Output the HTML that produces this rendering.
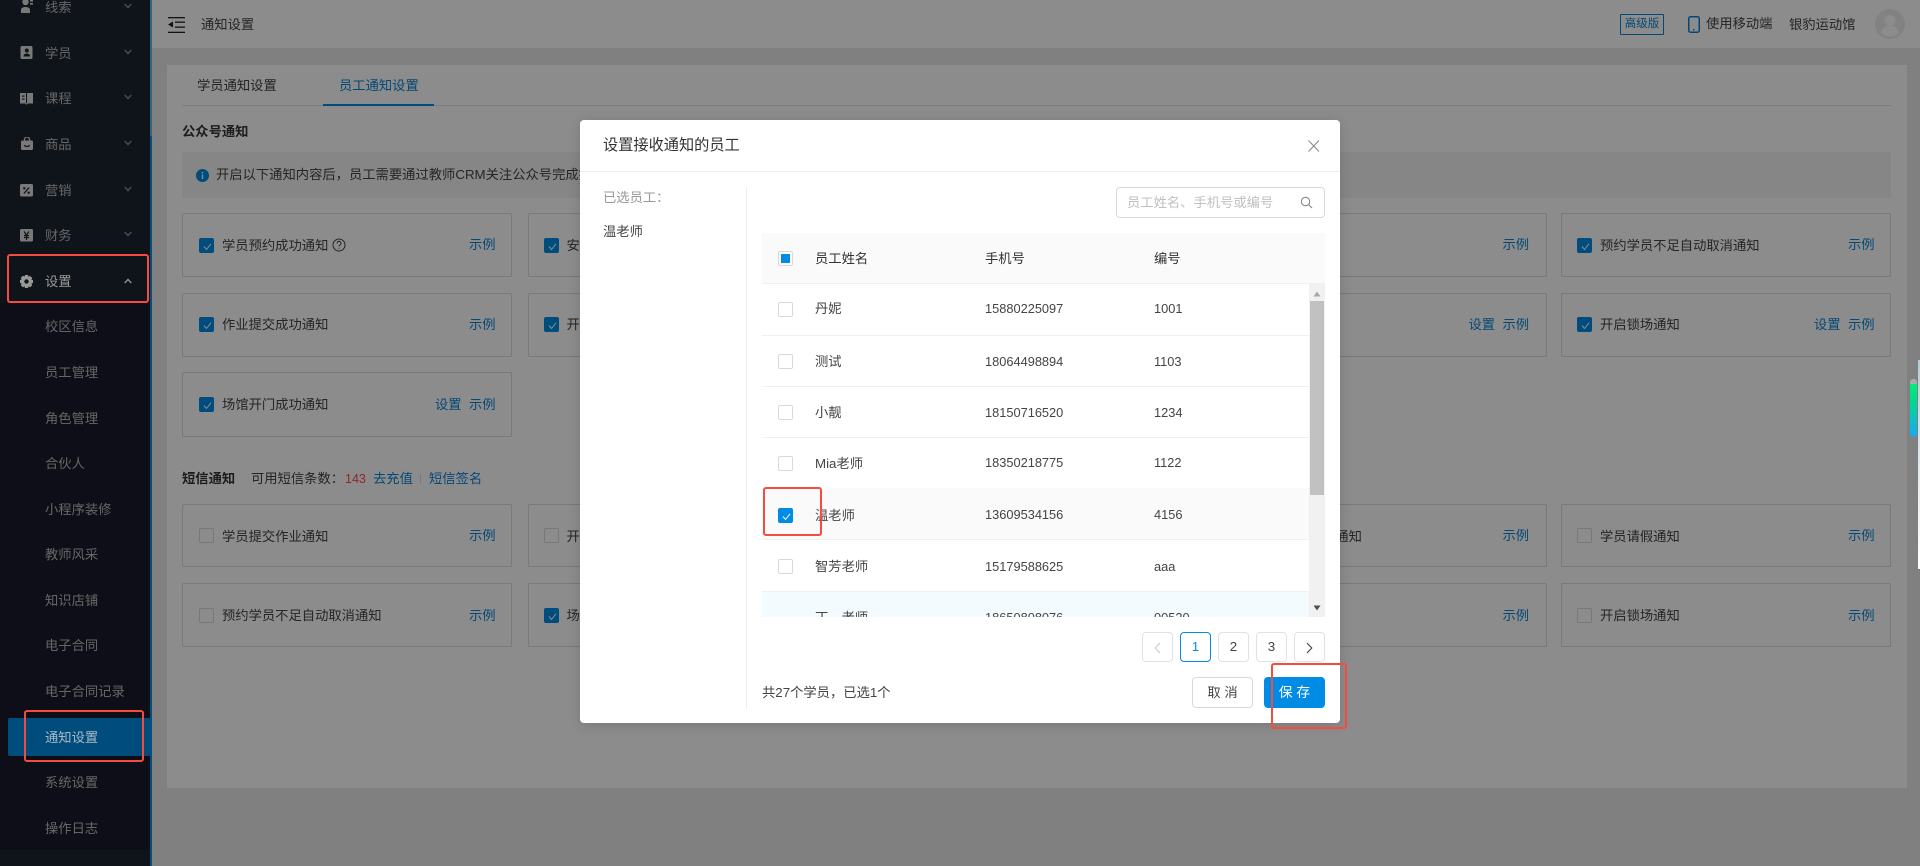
<!DOCTYPE html>
<html lang="zh"><head><meta charset="utf-8"><title>通知设置</title>
<style>
*{box-sizing:border-box}
html,body{margin:0;padding:0;width:1920px;height:866px;overflow:hidden}
body{position:relative;background:#e9e9e9;font:13.3px/20px "Liberation Sans","Noto Sans CJK SC",sans-serif;color:#444}
.a{position:absolute}
.t{position:absolute;white-space:nowrap;line-height:20px}
.side{color:#bbb;left:45px}
.l{color:#0a84d6}
.card{position:absolute;width:330px;border:1px solid #dcdcdc;border-radius:2px;background:#fff}
.cb{position:absolute;width:15px;height:15px;border:1px solid #d9d9d9;border-radius:2px;background:#fff}
.cb.on{background:#008ce4;border-color:#008ce4}
.cb.on svg{position:absolute;left:1px;top:1px}
.ch{position:absolute;left:124px}
.num{font-size:12.8px}
.pg{position:absolute;top:632px;width:31px;height:30px;border:1px solid #e2e2e2;border-radius:4px;background:#fff;text-align:center;line-height:28px;color:#444}
.rb{position:absolute;border:2px solid #f44c40;border-radius:3px;z-index:30}
.row{position:absolute;left:0;width:547px;height:52px;border-bottom:1px solid #f0f0f0}
</style></head><body>

<!-- sidebar -->
<div class="a" style="left:0;top:0;width:150px;height:866px;background:#1d2331"></div>
<div class="a" style="left:0;top:303px;width:150px;height:547px;background:#181b2a"></div>
<div class="a" style="left:150px;top:0;width:2px;height:136px;background:#5fbbe6"></div>
<div class="a" style="left:150px;top:136px;width:2px;height:730px;background:#0a8fe4"></div>

<svg class="a" style="left:20px;top:0" width="14" height="14" viewBox="0 0 14 14" fill="#ddd"><circle cx="5.5" cy="2" r="3.2"/><path d="M1 13v-3c0-2 2-3 4.500-3S10 8 10 10v3z"/><rect x="10" y="0" width="3" height="1.6"/><rect x="10" y="3" width="3" height="1.6"/></svg>
<svg class="a" style="left:20px;top:46px" width="13" height="13" viewBox="0 0 13 13"><rect x=".5" y="0" width="12" height="13" rx="1.500" fill="#ddd"/><circle cx="6.800" cy="4.500" r="2" fill="#1d2331"/><path d="M3.500 10.500c0-2 1.500-3 3.300-3s3.300 1 3.300 3z" fill="#1d2331"/></svg>
<svg class="a" style="left:20px;top:92px" width="13" height="13" viewBox="0 0 13 13"><path d="M0 1h5.500l1 1 1-1H13v10.500H7.500L6.500 13l-1-1.500H0z" fill="#ddd"/><rect x="2" y="3.500" width="2.500" height="1.200" fill="#1d2331"/><rect x="2" y="6.500" width="2.500" height="1.200" fill="#1d2331"/><rect x="6" y="2" width="1" height="9" fill="#1d2331"/></svg>
<svg class="a" style="left:21px;top:137px" width="12" height="13" viewBox="0 0 12 13"><path d="M3.500 4V2.500a2.500 2.500 0 0 1 5 0V4" fill="none" stroke="#ddd" stroke-width="1.200"/><rect x="0" y="3.500" width="12" height="9.500" rx="1.500" fill="#ddd"/><path d="M3.500 8c.5 2 4.500 2 5 0" stroke="#1d2331" stroke-width="1.200" fill="none"/></svg>
<svg class="a" style="left:20px;top:184px" width="13" height="13" viewBox="0 0 13 13"><rect width="13" height="12.500" rx="1.500" fill="#ddd"/><path d="M9 3.500 4 9.500" stroke="#1d2331" stroke-width="1.300"/><circle cx="4.300" cy="4.300" r="1.200" fill="#1d2331"/><circle cx="8.700" cy="8.700" r="1.200" fill="#1d2331"/></svg>
<svg class="a" style="left:20px;top:229px" width="13" height="13" viewBox="0 0 13 13"><rect width="13" height="12.500" rx="1.500" fill="#ddd"/><path d="M4 2.500 6.500 6 9 2.500M6.500 6v5M4 6.500h5M4 8.500h5" stroke="#1d2331" stroke-width="1.200" fill="none"/></svg>
<svg class="a" style="left:20px;top:275px;z-index:15" width="13" height="13" viewBox="0 0 13 13"><path d="M5 0h3l.5 1.800 1.700-.8 2 2-.8 1.700L13 5v3l-1.600.5.800 1.700-2 2-1.700-.8L8 13H5l-.5-1.600-1.700.8-2-2 .8-1.700L0 8V5l1.600-.5-.8-1.700 2-2 1.700.8z" fill="#999"/><circle cx="6.500" cy="6.500" r="2.200" fill="#10131b"/></svg>

<div class="t side" style="top:-2px">线索</div>
<div class="t side" style="top:44px">学员</div>
<div class="t side" style="top:89px">课程</div>
<div class="t side" style="top:135px">商品</div>
<div class="t side" style="top:181px">营销</div>
<div class="t side" style="top:226px">财务</div>
<div class="t" style="left:45px;top:272px;z-index:15;color:#9a9a9a">设置</div>
<div class="t side" style="top:317px">校区信息</div>
<div class="t side" style="top:363px">员工管理</div>
<div class="t side" style="top:409px">角色管理</div>
<div class="t side" style="top:454px">合伙人</div>
<div class="t side" style="top:500px">小程序装修</div>
<div class="t side" style="top:545px">教师风采</div>
<div class="t side" style="top:591px">知识店铺</div>
<div class="t side" style="top:636px">电子合同</div>
<div class="t side" style="top:682px">电子合同记录</div>
<div class="a" style="left:8px;top:718px;width:142px;height:38px;background:#008ce4;border-radius:2px 0 0 2px"></div>
<div class="t" style="left:45px;top:728px;z-index:15;color:#aab8c4">通知设置</div>
<div class="t side" style="top:773px">系统设置</div>
<div class="t side" style="top:819px">操作日志</div>

<svg class="ch" style="top:3px" width="8" height="6" viewBox="0 0 8 6"><path d="M.7 1 4 4.500 7.300 1" fill="none" stroke="#888" stroke-width="1.500"/></svg>
<svg class="ch" style="top:49px" width="8" height="6" viewBox="0 0 8 6"><path d="M.7 1 4 4.500 7.300 1" fill="none" stroke="#888" stroke-width="1.500"/></svg>
<svg class="ch" style="top:94px" width="8" height="6" viewBox="0 0 8 6"><path d="M.7 1 4 4.500 7.300 1" fill="none" stroke="#888" stroke-width="1.500"/></svg>
<svg class="ch" style="top:140px" width="8" height="6" viewBox="0 0 8 6"><path d="M.7 1 4 4.500 7.300 1" fill="none" stroke="#888" stroke-width="1.500"/></svg>
<svg class="ch" style="top:186px" width="8" height="6" viewBox="0 0 8 6"><path d="M.7 1 4 4.500 7.300 1" fill="none" stroke="#888" stroke-width="1.500"/></svg>
<svg class="ch" style="top:231px" width="8" height="6" viewBox="0 0 8 6"><path d="M.7 1 4 4.500 7.300 1" fill="none" stroke="#888" stroke-width="1.500"/></svg>
<svg class="ch" style="top:278px;z-index:15" width="8" height="6" viewBox="0 0 8 6"><path d="M.7 5 4 1.500 7.300 5" fill="none" stroke="#888" stroke-width="1.500"/></svg>

<!-- header -->
<div class="a" style="left:152px;top:0;width:1768px;height:48px;background:#fff"></div>
<svg class="a" style="left:168px;top:16px" width="17" height="17" viewBox="0 0 17 17" fill="#222"><rect y="1" width="17" height="1.300"/><rect y="15.700" width="17" height="1.300"/><rect x="7" y="5.500" width="10" height="1.300"/><rect x="7" y="10.500" width="10" height="1.300"/><path d="M0 8.500 5 5.500v6z"/></svg>
<div class="t" style="left:201px;top:15px">通知设置</div>
<div class="a" style="left:1620px;top:14px;width:44px;height:21px;border:1px solid #0a84d6;border-radius:1px;text-align:center;line-height:19px;font-size:11.500px;color:#0a84d6">高级版</div>
<svg class="a" style="left:1688px;top:16px" width="12" height="17" viewBox="0 0 12 17"><rect x=".75" y=".75" width="10.500" height="15.500" rx="1.800" fill="none" stroke="#0a84d6" stroke-width="1.500"/><rect x="5" y="13" width="1.500" height="1.500" fill="#0a84d6"/></svg>
<div class="t" style="left:1706px;top:14px">使用移动端</div>
<div class="t" style="left:1789px;top:15px">银豹运动馆</div>
<svg class="a" style="left:1875px;top:9px" width="30" height="30" viewBox="0 0 30 30"><circle cx="15" cy="15" r="15" fill="#ededed"/><circle cx="15" cy="11.500" r="5.500" fill="#fff"/><path d="M6 24c1-6 5-7 9-7s8 1 9 7c-2 2-5 3.500-9 3.500S8 26 6 24z" fill="#fff"/></svg>

<!-- main card -->
<div class="a" style="left:167px;top:65px;width:1740px;height:723px;background:#fff"></div>
<div class="a" style="left:182px;top:105px;width:1709px;height:1px;background:#e4e4e4"></div>
<div class="t" style="left:197px;top:76px">学员通知设置</div>
<div class="t l" style="left:339px;top:76px">员工通知设置</div>
<div class="a" style="left:323px;top:104px;width:111px;height:2px;background:#008ce4"></div>
<div class="t" style="left:182px;top:122px;font-weight:700;color:#333">公众号通知</div>
<div class="a" style="left:182px;top:152px;width:1709px;height:46px;background:#f4f4f4"></div>
<svg class="a" style="left:196px;top:169px" width="13" height="13" viewBox="0 0 13 13"><circle cx="6.500" cy="6.500" r="6.500" fill="#008ce4"/><rect x="5.800" y="5.500" width="1.400" height="4.500" fill="#fff"/><rect x="5.800" y="3" width="1.400" height="1.500" fill="#fff"/></svg>
<div class="t" style="left:216px;top:165px">开启以下通知内容后，员工需要通过教师CRM关注公众号完成授权</div>

<!-- row 1 -->
<div class="card" style="left:182px;top:213px;height:64px"><div class="cb on" style="left:16px;top:24px"><svg width="13" height="13" viewBox="0 0 13 13"><path d="M3 6.500 5.500 9.500 10 3.800" fill="none" stroke="#fff" stroke-width="1"/></svg></div><div class="t" style="left:39px;top:22px">学员预约成功通知</div><svg class="a" style="left:149px;top:24px" width="14" height="14" viewBox="0 0 14 14"><circle cx="7" cy="7" r="6" fill="none" stroke="#444"/><path d="M5 5.500c0-3 4-3 4 0 0 1.500-2 1.500-2 3" fill="none" stroke="#444"/><rect x="6.500" y="9.700" width="1" height="1" fill="#444"/></svg><div class="t l" style="left:286px;top:21px">示例</div></div>
<div class="card" style="left:527.500px;top:213px;height:64px"><div class="cb on" style="left:15px;top:24px"><svg width="13" height="13" viewBox="0 0 13 13"><path d="M3 6.500 5.500 9.500 10 3.800" fill="none" stroke="#fff" stroke-width="1"/></svg></div><div class="t" style="left:38px;top:22px">安排上课通知</div></div>
<div class="card" style="left:1216.500px;top:213px;height:64px"><div class="t l" style="left:285px;top:21px">示例</div></div>
<div class="card" style="left:1561px;top:213px;height:64px"><div class="cb on" style="left:15px;top:24px"><svg width="13" height="13" viewBox="0 0 13 13"><path d="M3 6.500 5.500 9.500 10 3.800" fill="none" stroke="#fff" stroke-width="1"/></svg></div><div class="t" style="left:38px;top:22px">预约学员不足自动取消通知</div><div class="t l" style="left:286px;top:21px">示例</div></div>
<!-- row 2 -->
<div class="card" style="left:182px;top:293px;height:64px"><div class="cb on" style="left:16px;top:23px"><svg width="13" height="13" viewBox="0 0 13 13"><path d="M3 6.500 5.500 9.500 10 3.800" fill="none" stroke="#fff" stroke-width="1"/></svg></div><div class="t" style="left:39px;top:21px">作业提交成功通知</div><div class="t l" style="left:286px;top:21px">示例</div></div>
<div class="card" style="left:527.500px;top:293px;height:64px"><div class="cb on" style="left:15px;top:23px"><svg width="13" height="13" viewBox="0 0 13 13"><path d="M3 6.500 5.500 9.500 10 3.800" fill="none" stroke="#fff" stroke-width="1"/></svg></div><div class="t" style="left:38px;top:21px">开课提醒通知</div></div>
<div class="card" style="left:1216.500px;top:293px;height:64px"><div class="t l" style="left:251px;top:21px">设置</div><div class="t l" style="left:285px;top:21px">示例</div></div>
<div class="card" style="left:1561px;top:293px;height:64px"><div class="cb on" style="left:15px;top:23px"><svg width="13" height="13" viewBox="0 0 13 13"><path d="M3 6.500 5.500 9.500 10 3.800" fill="none" stroke="#fff" stroke-width="1"/></svg></div><div class="t" style="left:38px;top:21px">开启锁场通知</div><div class="t l" style="left:252px;top:21px">设置</div><div class="t l" style="left:286px;top:21px">示例</div></div>
<!-- row 3 -->
<div class="card" style="left:182px;top:372px;height:65px"><div class="cb on" style="left:16px;top:24px"><svg width="13" height="13" viewBox="0 0 13 13"><path d="M3 6.500 5.500 9.500 10 3.800" fill="none" stroke="#fff" stroke-width="1"/></svg></div><div class="t" style="left:39px;top:22px">场馆开门成功通知</div><div class="t l" style="left:252px;top:22px">设置</div><div class="t l" style="left:286px;top:22px">示例</div></div>

<!-- SMS -->
<div class="t" style="left:182px;top:469px;font-weight:700;color:#333">短信通知</div>
<div class="t" style="left:251px;top:469px">可用短信条数：</div>
<div class="t" style="left:345px;top:469px;color:#ff4a50;font-size:12.500px">143</div>
<div class="t l" style="left:373px;top:469px">去充值</div>
<div class="a" style="left:420px;top:474px;width:1px;height:10px;background:#ddd"></div>
<div class="t l" style="left:429px;top:469px">短信签名</div>

<div class="card" style="left:182px;top:504px;height:63px"><div class="cb" style="left:16px;top:23px"></div><div class="t" style="left:39px;top:22px">学员提交作业通知</div><div class="t l" style="left:286px;top:21px">示例</div></div>
<div class="card" style="left:527.500px;top:504px;height:63px"><div class="cb" style="left:15px;top:23px"></div><div class="t" style="left:38px;top:22px">开课提醒通知</div></div>
<div class="card" style="left:1216.500px;top:504px;height:63px"><div class="t" style="left:38px;top:22px">学员预约取消通知</div><div class="t l" style="left:285px;top:21px">示例</div></div>
<div class="card" style="left:1561px;top:504px;height:63px"><div class="cb" style="left:15px;top:23px"></div><div class="t" style="left:38px;top:22px">学员请假通知</div><div class="t l" style="left:286px;top:21px">示例</div></div>

<div class="card" style="left:182px;top:583px;height:64px"><div class="cb" style="left:16px;top:24px"></div><div class="t" style="left:39px;top:22px">预约学员不足自动取消通知</div><div class="t l" style="left:286px;top:22px">示例</div></div>
<div class="card" style="left:527.500px;top:583px;height:64px"><div class="cb on" style="left:15px;top:24px"><svg width="13" height="13" viewBox="0 0 13 13"><path d="M3 6.500 5.500 9.500 10 3.800" fill="none" stroke="#fff" stroke-width="1"/></svg></div><div class="t" style="left:38px;top:22px">场馆开门成功通知</div></div>
<div class="card" style="left:1216.500px;top:583px;height:64px"><div class="t l" style="left:285px;top:22px">示例</div></div>
<div class="card" style="left:1561px;top:583px;height:64px"><div class="cb" style="left:15px;top:24px"></div><div class="t" style="left:38px;top:22px">开启锁场通知</div><div class="t l" style="left:286px;top:22px">示例</div></div>

<!-- overlay -->
<div class="a" style="left:0;top:0;width:1918px;height:866px;background:rgba(0,0,0,.45);z-index:10"></div>
<div class="a" style="left:1918px;top:0;width:2px;height:866px;background:rgba(0,0,0,.45);z-index:10"></div>
<div class="a" style="left:1918px;top:360px;width:2px;height:209px;background:linear-gradient(#b8cdd8,#e8eef2 60%,#fff);z-index:11"></div>

<!-- scroll indicator -->
<div class="a" style="left:1910px;top:379px;width:7px;height:58px;border-radius:4px;background:linear-gradient(#00ee77 10%,#00d890 40%,#14aef0 95%);z-index:12;overflow:hidden"><div style="height:5px;background:#aaa"></div></div>

<!-- modal -->
<div class="a" style="left:580px;top:120px;width:760px;height:603px;background:#fff;border-radius:4px;z-index:20;box-shadow:0 2px 12px rgba(0,0,0,.15)"></div>
<div style="position:absolute;left:0;top:0;z-index:21;width:1920px;height:866px">
<div class="a" style="left:580px;top:171px;width:760px;height:1px;background:#ededed"></div>
<div class="t" style="left:603px;top:136px;font-size:15.200px;color:#333">设置接收通知的员工</div>
<svg class="a" style="left:1308px;top:140px" width="12" height="12" viewBox="0 0 12 12"><path d="M.5.500 11 11.500M11 .5.500 11.500" stroke="#888" stroke-width="1" fill="none"/></svg>
<div class="a" style="left:746px;top:187px;width:1px;height:521px;background:#ececec"></div>
<div class="t" style="left:603px;top:188px;color:#999">已选员工：</div>
<div class="t" style="left:603px;top:222px;color:#444">温老师</div>

<div class="a" style="left:1116px;top:187px;width:209px;height:31px;border:1px solid #d9d9d9;border-radius:4px"></div>
<div class="t" style="left:1127px;top:193px;color:#c0c0c0">员工姓名、手机号或编号</div>
<svg class="a" style="left:1300px;top:196px" width="13" height="13" viewBox="0 0 13 13"><circle cx="5.500" cy="5.500" r="4.200" fill="none" stroke="#888" stroke-width="1.100"/><path d="M8.500 8.500 12 12" stroke="#888" stroke-width="1.200"/></svg>

<div class="a" style="left:762px;top:233px;width:563px;height:51px;background:#fafafa;border-bottom:1px solid #f0f0f0"></div>
<div class="cb" style="left:778px;top:251px"></div>
<div class="a" style="left:781px;top:254px;width:9px;height:9px;background:#008ce4"></div>
<div class="t" style="left:815px;top:249px;color:#333">员工姓名</div>
<div class="t" style="left:985px;top:249px;color:#333">手机号</div>
<div class="t" style="left:1154px;top:249px;color:#333">编号</div>

<div class="a" style="left:762px;top:284px;width:563px;height:333px;overflow:hidden">
 <div class="row" style="top:0"></div>
 <div class="row" style="top:51px;height:52px"></div>
 <div class="row" style="top:102px;height:52px"></div>
 <div class="row" style="top:153px;height:52px"></div>
 <div class="row" style="top:204px;height:52px;background:#fafafa"></div>
 <div class="row" style="top:256px;height:52px"></div>
 <div class="row" style="top:307px;height:60px;background:#f4fbff;border-top:1px solid #f0f0f0"></div>
 <div class="cb" style="left:16px;top:18px"></div><div class="t" style="left:53px;top:15px">丹妮</div><div class="t num" style="left:223px;top:15px">15880225097</div><div class="t num" style="left:392px;top:15px">1001</div>
 <div class="cb" style="left:16px;top:70px"></div><div class="t" style="left:53px;top:68px">测试</div><div class="t num" style="left:223px;top:68px">18064498894</div><div class="t num" style="left:392px;top:68px">1103</div>
 <div class="cb" style="left:16px;top:121px"></div><div class="t" style="left:53px;top:119px">小靓</div><div class="t num" style="left:223px;top:119px">18150716520</div><div class="t num" style="left:392px;top:119px">1234</div>
 <div class="cb" style="left:16px;top:172px"></div><div class="t" style="left:53px;top:170px">Mia老师</div><div class="t num" style="left:223px;top:169px">18350218775</div><div class="t num" style="left:392px;top:169px">1122</div>
 <div class="cb on" style="left:16px;top:224px"><svg width="13" height="13" viewBox="0 0 13 13"><path d="M3 6.500 5.500 9.500 10 3.800" fill="none" stroke="#fff" stroke-width="1"/></svg></div><div class="t" style="left:53px;top:222px">温老师</div><div class="t num" style="left:223px;top:221px">13609534156</div><div class="t num" style="left:392px;top:221px">4156</div>
 <div class="cb" style="left:16px;top:275px"></div><div class="t" style="left:53px;top:273px">智芳老师</div><div class="t num" style="left:223px;top:273px">15179588625</div><div class="t num" style="left:392px;top:273px">aaa</div>
 <div class="t" style="left:53px;top:324px">丁　老师</div><div class="t num" style="left:223px;top:324px">18650808076</div><div class="t num" style="left:392px;top:324px">00520</div>
 <div class="a" style="left:547px;top:0;width:16px;height:333px;background:#f1f1f1"></div>
 <div class="a" style="left:548px;top:17px;width:14px;height:194px;background:#c1c1c1"></div>
 <svg class="a" style="left:551px;top:7px" width="8" height="6" viewBox="0 0 8 6"><path d="M4 .5 7.500 5.500H.5z" fill="#a8a8a8"/></svg>
 <svg class="a" style="left:551px;top:321px" width="8" height="6" viewBox="0 0 8 6"><path d="M4 5.500 7.500.5H.5z" fill="#505050"/></svg>
</div>

<div class="pg" style="left:1142px"><svg width="7" height="12" viewBox="0 0 7 12" style="margin-top:9px;display:block;margin-left:11px"><path d="M6 1 1.200 6 6 11" fill="none" stroke="#c8c8c8" stroke-width="1.100"/></svg></div>
<div class="pg" style="left:1180px;border-color:#008ce4;color:#008ce4">1</div>
<div class="pg" style="left:1218px">2</div>
<div class="pg" style="left:1256px">3</div>
<div class="pg" style="left:1294px"><svg width="7" height="12" viewBox="0 0 7 12" style="margin-top:9px;display:block;margin-left:11px"><path d="M1 1 5.800 6 1 11" fill="none" stroke="#444" stroke-width="1.100"/></svg></div>

<div class="t" style="left:762px;top:683px">共27个学员，已选1个</div>
<div class="a" style="left:1192px;top:677px;width:61px;height:31px;border:1px solid #d9d9d9;border-radius:4px;background:#fff;text-align:center;line-height:29px;color:#444">取 消</div>
<div class="a" style="left:1264px;top:677px;width:61px;height:31px;border-radius:4px;background:#008ce4;text-align:center;line-height:31px;color:#fff;font-size:13.800px">保 存</div>
</div>

<!-- red annotation boxes -->
<div class="rb" style="left:7px;top:254px;width:142px;height:49px"></div>
<div class="rb" style="left:24px;top:710px;width:120px;height:52px"></div>
<div class="rb" style="left:763px;top:487px;width:59px;height:49px"></div>
<div class="rb" style="left:1271px;top:663px;width:76px;height:66px"></div>
</body></html>
